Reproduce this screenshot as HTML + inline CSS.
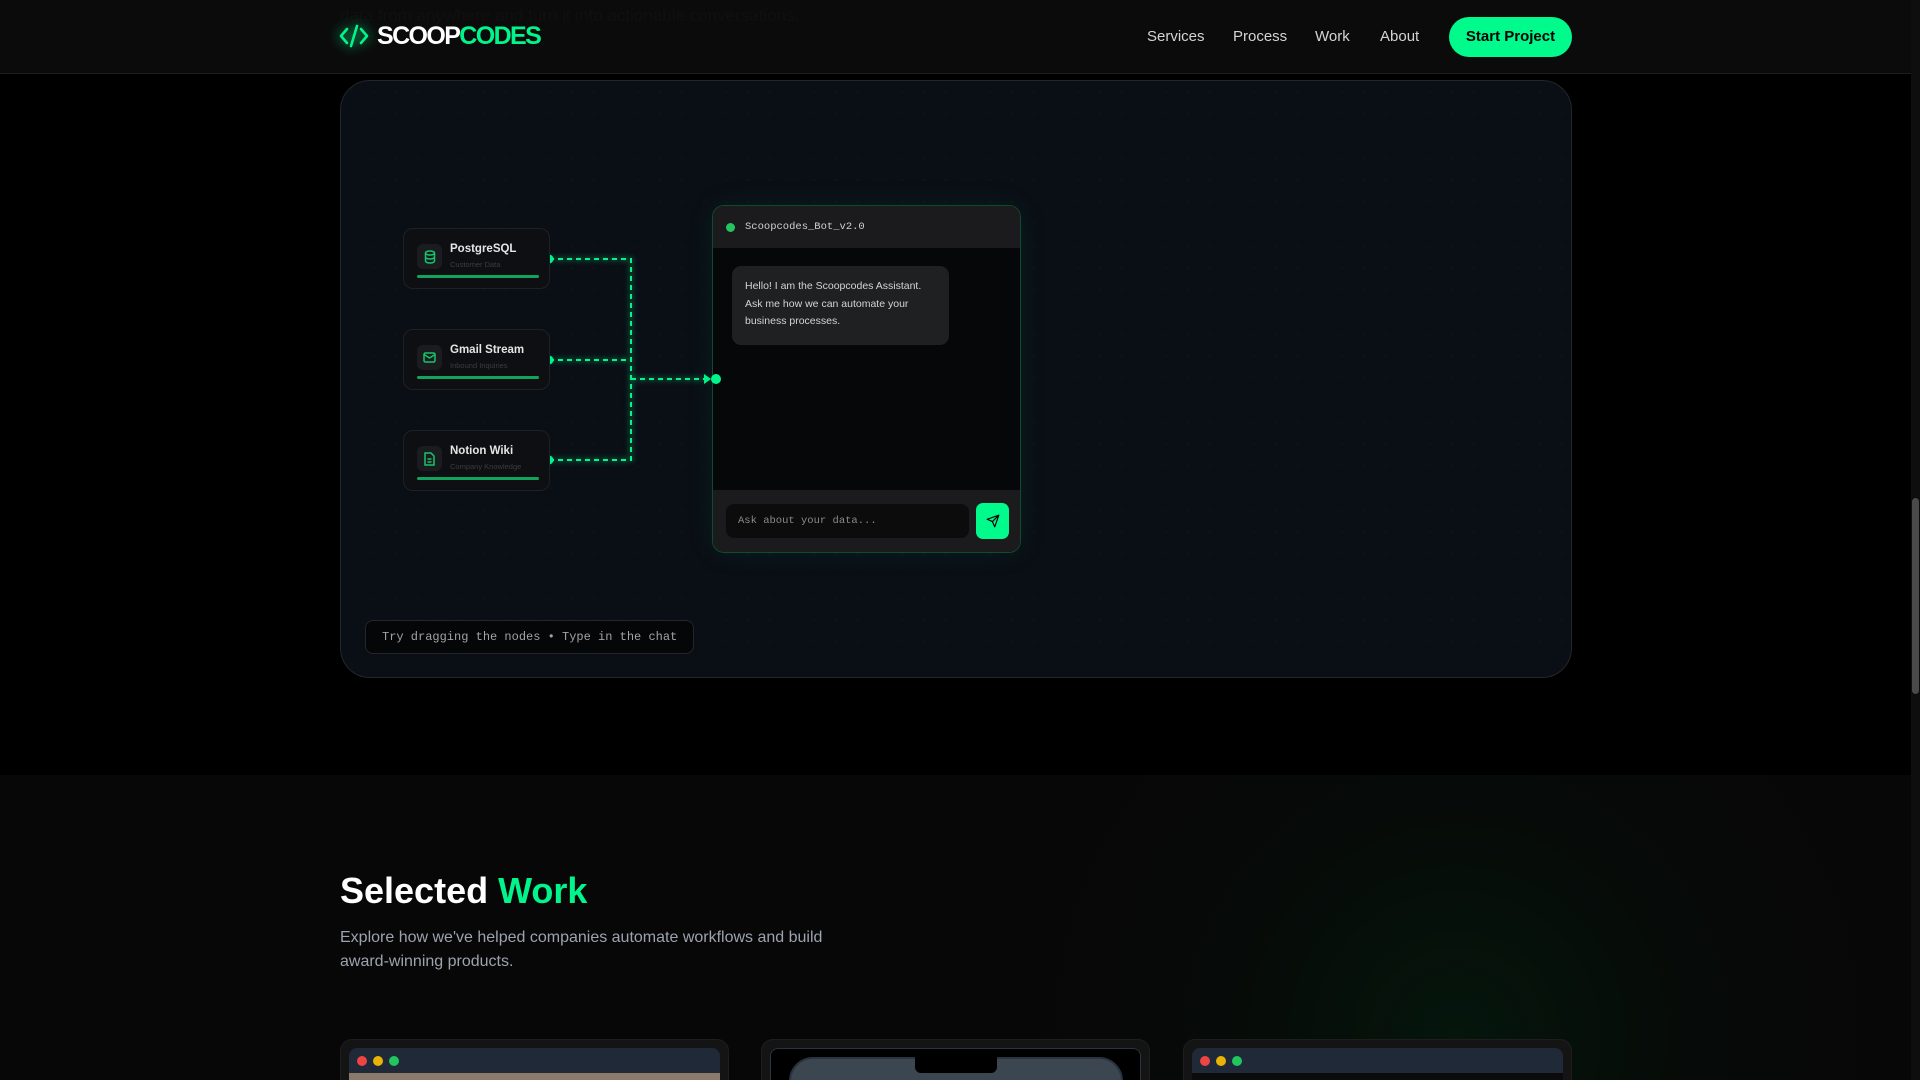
<!DOCTYPE html>
<html style="overflow:hidden;width:1920px;height:1080px"><head><meta charset="utf-8"><style>
*{box-sizing:border-box;margin:0;padding:0}
body{width:1920px;height:1080px;overflow:hidden;background:#000;font-family:"Liberation Sans",sans-serif;position:relative}
.mono{font-family:"Liberation Mono",monospace}
.nav{position:absolute;left:0;top:0;width:1911px;height:74px;background:#0b0b0b;border-bottom:1px solid #1d1d1d;z-index:5}
.ghost{position:absolute;left:340px;top:6px;color:#101010;font-size:17px}
.logo{position:absolute;left:338px;top:21px;display:flex;align-items:center}
.logo .t{font-size:25px;font-weight:bold;letter-spacing:-1.6px;color:#fff;margin-left:7px}
.logo .t span{color:#00f58a}
.links a{position:absolute;top:28px;color:#d4d4d8;font-size:15px;text-decoration:none}
.btn{position:absolute;left:1449px;top:17px;width:123px;height:40px;border-radius:20px;background:#00fa8c;color:#000;font-weight:bold;font-size:15px;text-align:center;line-height:40px}
.scroll{position:absolute;left:1911px;top:0;width:9px;height:1080px;background:#0e0e0e}
.thumb{position:absolute;left:1912px;top:498px;width:7px;height:196px;background:#4a4a4a;border-radius:4px}
.card{position:absolute;left:340px;top:80px;width:1232px;height:598px;border-radius:30px;background:#0a0e15;border:1px solid #23262c;background-image:radial-gradient(#10141b 1px,transparent 1px);background-size:22px 22px}
.node{position:absolute;left:403px;width:147px;height:61px;border-radius:10px;background:#0e0f12;border:1px solid #1f2125}
.node .ic{position:absolute;left:13px;top:15px;width:25px;height:25px;border-radius:6px;background:#1a1c1f;display:flex;align-items:center;justify-content:center}
.node .tt{position:absolute;left:46px;top:14px;color:#e5e5e5;font-size:11.5px;font-weight:bold}
.node .st{position:absolute;left:46px;top:31px;color:#3a3d42;font-size:7.5px}
.node .bar{position:absolute;left:13px;top:46px;width:122px;height:3px;border-radius:2px;background:#12a35c}
.chat{position:absolute;left:712px;top:205px;width:309px;height:348px;border-radius:12px;border:1px solid #124a2d;background:#060709;overflow:hidden;box-shadow:0 0 30px rgba(0,245,138,0.08)}
.ch{height:42px;background:#1b1b1d;display:flex;align-items:center;padding-left:13px}
.ch .d{width:9px;height:9px;border-radius:50%;background:#22c55e;margin-right:10px}
.ch span{color:#cfcfcf;font-size:10.5px}
.bub{position:absolute;left:19px;top:60px;width:217px;height:79px;border-radius:9px;background:#1f2022;color:#d4d4d4;font-size:10.5px;line-height:17.5px;padding:12px 13px}
.ci{position:absolute;left:0;bottom:0;width:100%;height:62px;background:#1b1b1d}
.inp{position:absolute;left:13px;top:14px;width:243px;height:34px;border-radius:8px;background:#0c0c0d;color:#8a8a8a;font-size:10.5px;line-height:34px;padding-left:12px}
.sb{position:absolute;left:263px;top:13px;width:33px;height:36px;border-radius:7px;background:#00fa8c;display:flex;align-items:center;justify-content:center}
.hint{position:absolute;left:365px;top:620px;width:329px;height:34px;border-radius:8px;border:1px solid #24262b;background:#050608;color:#a3a3a3;font-size:12px;line-height:32px;padding-left:16px}
.sec{position:absolute;left:0;top:775px;width:1911px;height:305px;overflow:hidden;background:#070707;background-image:radial-gradient(circle at 1457px 260px,rgba(0,60,25,0.28),rgba(0,35,15,0.1) 240px,transparent 430px)}
h2{position:absolute;left:340px;top:870px;font-size:36px;color:#fff;font-weight:bold}
h2 span{color:#00f58a}
.p{position:absolute;left:340px;top:926px;width:500px;color:#9ca3af;font-size:16px;line-height:24px}
.wc{position:absolute;top:1039px;width:389px;height:60px;border-radius:12px;background:#141414;border:1px solid #1e1e1e}
.wc .in{position:absolute;left:8px;top:8px;right:8px;height:60px;border-radius:8px;background:#1f2937;overflow:hidden}
.dots{position:absolute;left:8px;top:8px;display:flex;gap:6px}
.dots i{width:10px;height:10px;border-radius:50%;display:block}
</style></head><body>
<div class="nav">
<div class="ghost">data from anywhere and turn it into actionable conversations.</div>
<div class="logo"><svg width="32" height="30" viewBox="0 0 32 30" style="filter:drop-shadow(0 0 6px #00f58a)"><path d="M9 8 L3 15 L9 22 M23 8 L29 15 L23 22 M19 5 L13 25" stroke="#00f58a" stroke-width="2.6" fill="none" stroke-linecap="round" stroke-linejoin="round"/></svg><div class="t">SCOOP<span>CODES</span></div></div>
<div class="links"><a style="left:1147px">Services</a><a style="left:1233px">Process</a><a style="left:1315px">Work</a><a style="left:1380px">About</a></div>
<div class="btn">Start Project</div>
</div>
<div class="scroll"></div><div class="thumb"></div>
<div class="card"></div>
<svg style="position:absolute;left:0;top:0" width="1920" height="700">
<g stroke="#00f58a" stroke-width="2" fill="none" stroke-dasharray="5 4" style="filter:drop-shadow(0 0 3px #00f58a)">
<path d="M549 259 H631 V460 H549"/><path d="M549 360 H631"/><path d="M631 379 H708"/>
</g>
<path d="M704 374 L711 379 L704 384Z" fill="#00f58a"/>
<circle cx="549" cy="259" r="4.5" fill="#00f58a"/><circle cx="549" cy="360" r="4.5" fill="#00f58a"/><circle cx="549" cy="460" r="4.5" fill="#00f58a"/>
</svg>
<div class="node" style="top:228px"><div class="ic"><svg width="12" height="14" viewBox="0 0 12 14" fill="none" stroke="#16c46a" stroke-width="1.5"><ellipse cx="6" cy="3" rx="4.5" ry="2"/><path d="M1.5 3v8c0 1.1 2 2 4.5 2s4.5-.9 4.5-2V3M1.5 7c0 1.1 2 2 4.5 2s4.5-.9 4.5-2"/></svg></div><div class="tt">PostgreSQL</div><div class="st">Customer Data</div><div class="bar"></div></div>
<div class="node" style="top:329px"><div class="ic"><svg width="13" height="11" viewBox="0 0 13 11" fill="none" stroke="#16c46a" stroke-width="1.5"><rect x="1" y="1" width="11" height="9" rx="1.5"/><path d="M1 2.5 L6.5 6 L12 2.5"/></svg></div><div class="tt">Gmail Stream</div><div class="st">Inbound Inquiries</div><div class="bar"></div></div>
<div class="node" style="top:430px"><div class="ic"><svg width="11" height="14" viewBox="0 0 11 14" fill="none" stroke="#16c46a" stroke-width="1.5"><path d="M1 1h6l3 3v9H1z M3.5 7h4M3.5 10h4"/></svg></div><div class="tt">Notion Wiki</div><div class="st">Company Knowledge</div><div class="bar"></div></div>
<div style="position:absolute;left:711px;top:374px;width:10px;height:10px;border-radius:50%;background:#00f58a;z-index:3"></div>
<div class="chat">
<div class="ch"><div class="d"></div><span class="mono">Scoopcodes_Bot_v2.0</span></div>
<div class="bub">Hello! I am the Scoopcodes Assistant. Ask me how we can automate your business processes.</div>
<div class="ci"><div class="inp mono">Ask about your data...</div><div class="sb"><svg width="14" height="14" viewBox="0 0 24 24" fill="none" stroke="#000" stroke-width="2" stroke-linejoin="round"><path d="M22 2 L11 13 M22 2 L15 22 L11 13 L2 9 Z"/></svg></div></div>
</div>
<div class="hint mono">Try dragging the nodes • Type in the chat</div>
<div class="sec">
<div class="wc" style="left:340px;top:264px"><div class="in"><div class="dots"><i style="background:#ef4444"></i><i style="background:#eab308"></i><i style="background:#22c55e"></i></div><div style="position:absolute;left:0;top:25px;width:100%;height:40px;background:#8a7a6c"></div></div></div>
<div class="wc" style="left:761px;top:264px"><div class="in" style="background:#000;border:1px solid #2a3340"><div style="position:absolute;left:18px;top:8px;width:334px;height:60px;border-radius:24px;background:#3b4650;border:2px solid #2a3340"></div><div style="position:absolute;left:144px;top:8px;width:82px;height:16px;border-radius:0 0 6px 6px;background:#000"></div></div></div>
<div class="wc" style="left:1183px;top:264px"><div class="in"><div class="dots"><i style="background:#ef4444"></i><i style="background:#eab308"></i><i style="background:#22c55e"></i></div><div style="position:absolute;left:0;top:25px;width:100%;height:40px;background:#0b0b0b"></div></div></div>
</div>
<h2>Selected <span>Work</span></h2>
<div class="p">Explore how we've helped companies automate workflows and build award-winning products.</div>
</body></html>
